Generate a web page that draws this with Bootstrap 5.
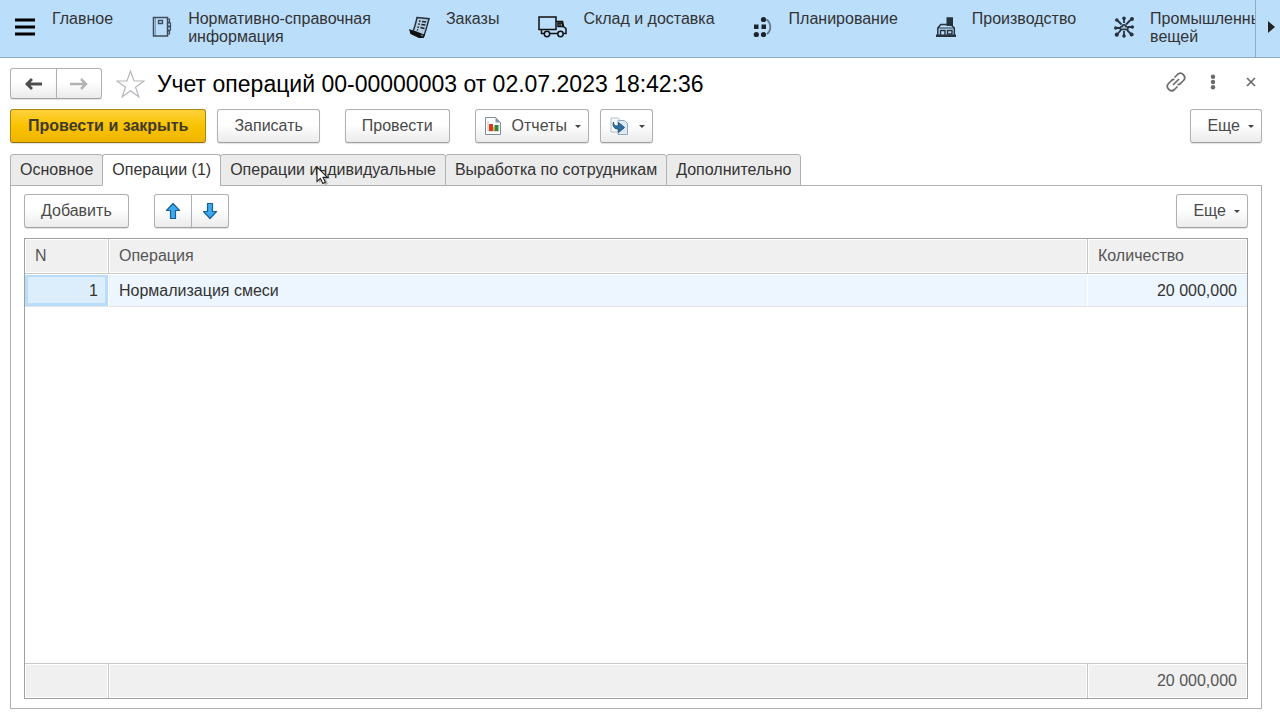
<!DOCTYPE html>
<html lang="ru">
<head>
<meta charset="utf-8">
<meta name="viewport" content="width=device-width, initial-scale=1">
<title>Учет операций</title>
<link href="https://cdn.jsdelivr.net/npm/bootstrap@5.3.0/dist/css/bootstrap.min.css" rel="stylesheet">
<style>
  body { font-family: "Liberation Sans", Arial, sans-serif; font-size: 16px; line-height: 18px; color: #333; background: #fff; }
  button { font-family: inherit; }
  svg { display: block; flex: none; }

  /* Section bar */
  .sections { background: #bbdefb; border-bottom: 1px solid #8eabc2; height: 58px; }
  .sections-menu { width: 52px; padding: 17px 0 0 14px; }
  .sections-list { gap: 38px; padding-top: 10px; overflow: hidden; }
  .sections-list a { color: #333; gap: 16px; white-space: nowrap; }
  .sections-list svg { margin-top: 6px; }
  .sections-next { width: 25px; border-left: 1px solid #8eabc2 !important; }

  .page-body { padding: 10px 18px 11px 10px; }
  .doc-title { font-size: 23px; line-height: 30px; color: #000; }
  .plain-icon { color: #6b6b6b; }
  .favorite { margin: 0 12px 0 14px; }

  /* Command buttons */
  .cmd-row { margin-top: 10px; }
  .gap-near { margin-left: 11px; }
  .gap-far { margin-left: 25px; }
  .cmd { --bs-btn-font-size: 16px; --bs-btn-line-height: 18px; --bs-btn-padding-x: 16px; --bs-btn-padding-y: 7px;
    --bs-btn-border-radius: 3px; --bs-btn-color: #4a4a4a; --bs-btn-border-color: #b0b0b0; --bs-btn-hover-border-color: #909090;
    display: inline-flex; align-items: center; height: 34px; white-space: nowrap;
    background: linear-gradient(#fff 45%, #ebebeb); border-bottom-color: #a0a0a0; box-shadow: 0 1px 1px rgba(0,0,0,.12); }
  .cmd-main { --bs-btn-padding-x: 17px; --bs-btn-color: #3f3a2c; --bs-btn-border-color: #a8860f; font-weight: 700;
    background: linear-gradient(#fdd03b, #fac300 50%, #f0b400); border-bottom-color: #937200; }
  .cmd-nav { height: 31px; padding: 0 13px; }
  .cmd-arrow { padding: 0 10px; }
  .cmd-icon { padding-left: 9px; }
  .cmd-icon svg { margin-right: 11px; }
  .cmd-icon-only svg { margin-right: 2px; }
  .caret { width: 0; border: 3px solid transparent; border-top-color: #444; border-bottom: 0; margin-left: 8px; margin-right: -9px; }

  /* Tabs */
  .doc-tabs { --bs-nav-tabs-border-color: #b0b0b0; margin-top: 11px; }
  .doc-tabs .nav-link { padding: 6px 9px; height: 32px; line-height: 18px; color: #333; background: #ebebeb;
    border-color: #b0b0b0; border-radius: 3px 3px 0 0; white-space: nowrap; }
  .doc-tabs .nav-item + .nav-item { margin-left: -1px; }
  .doc-tabs .nav-link.active { background: #fff; color: #333; border-color: #b0b0b0 #b0b0b0 #fff; }
  .pointer { position: absolute; left: 96px; top: 12px; z-index: 5; pointer-events: none; }
  .doc-pane { border: 1px solid #b0b0b0; border-top: 0; padding: 8px 13px 9px; }

  /* Operations grid */
  .grid-frame { border: 1px solid #a0a0a0; margin-top: 10px; }
  .ops-grid.table { margin: 0; color: #333; table-layout: fixed; border-collapse: separate; border-spacing: 0; }
  .ops-grid.table > * > tr > * { padding: 0 10px; font-weight: 400; vertical-align: middle; border: 0 solid #c8c8c8; box-shadow: none; }
  .ops-grid .col-n { width: 84px; }
  .ops-grid .col-qty { width: 159px; }
  .ops-grid.table > thead > tr > th, .ops-grid.table > tfoot > tr > td { background: #f0f0f0; color: #555; box-shadow: inset 0 0 0 1px #fff; height: 35px; }
  .ops-grid.table > thead > tr > th { border-bottom-width: 1px; }
  .ops-grid.table > tfoot > tr > td { border-top-width: 1px; }
  .ops-grid.table > thead > tr > :not(:last-child), .ops-grid.table > tfoot > tr > :not(:last-child) { border-right-width: 1px; }
  .ops-grid.table > tbody > .row-current > td { height: 33px; padding-top: 2px; background: #edf6fe; border-bottom: 1px solid #e4e4e4; border-right: 1px solid #fff; box-shadow: inset 0 1px 0 #fff; }
  .ops-grid.table > tbody > .row-current > .cell-current { background: #dcedfc; box-shadow: inset 0 1px 0 #fff, inset 0 0 0 3px #b8dcf9; }
  .ops-grid.table > tbody > .row-current > td:last-child { border-right: 0; }
</style>
</head>
<body class="min-vh-100 d-flex flex-column">

<nav class="sections d-flex flex-shrink-0" aria-label="Разделы">
  <button type="button" class="sections-menu border-0 bg-transparent d-flex flex-shrink-0" aria-label="Меню">
    <svg width="22" height="20" viewBox="0 0 22 20"><path d="M1 3h20M1 10h20M1 17h20" stroke="#000" stroke-width="3"/></svg>
  </button>
  <div class="sections-list d-flex flex-grow-1">
    <a href="#" class="text-decoration-none">Главное</a>
    <a href="#" class="d-flex text-decoration-none">
      <svg width="21" height="22" viewBox="0 0 21 22" fill="none" stroke="#3c4c5a"><path d="M2.500 1.500h14v18.500h-14z" stroke-width="1.500"/><path d="M4.500 2v18" stroke-opacity=".45"/><path d="M7.500 4.500h4v3h-4z" stroke-width="1.300"/><path d="M17 3h1.500v3H17m0 1h2.500v3H17m0 1h2.500v3H17m0 1h1.500v3H17" stroke-width="1.200"/></svg>
      <span>Нормативно-справочная<br>информация</span></a>
    <a href="#" class="d-flex text-decoration-none">
      <svg width="21" height="22" viewBox="0 0 21 22"><path d="M8 1.500l12 1.200c-1.500 5-3 12-5 16.500L4 15C6 11 7 6 8 1.500z" fill="#b3cbdf" stroke="#26323c" stroke-width="1.500"/><path d="M1 14l10.500 4 .5 2.800c1.500.5 3-.4 3.500-2.300l-1 2.500c-1 1-2 1.200-3.500.8L2 17.500z" fill="#111" stroke="#111" stroke-width="1.300"/><path d="M10 5l1.500.2M13 5.500l4 .5M9.300 8l1.500.3M12.300 8.500l4 .6M8.500 11l1.500.4M11.500 11.600l4 .8M8 13.800l1 .3" stroke="#17212a" stroke-width="1.500"/></svg>
      <span>Заказы</span></a>
    <a href="#" class="d-flex text-decoration-none">
      <svg width="30" height="22" viewBox="0 0 30 22" fill="none" stroke="#111" stroke-width="1.500"><path d="M2 1h17v12.500H2zM19 5.500h6.500l1 5 2.500 2v5h-2.500M4.500 14v3.500H7m6 0h8"/><path d="M21 7h4l.8 3.500H21z"/><path d="M23 7v3"/><circle cx="10" cy="18" r="2.700"/><circle cx="23.500" cy="18" r="2.700"/></svg>
      <span>Склад и доставка</span></a>
    <a href="#" class="d-flex text-decoration-none">
      <svg width="20" height="22" viewBox="0 0 20 22"><g fill="#1b242c"><circle cx="10.500" cy="3.500" r="2.600"/><path d="M1 8.500h4.500V13H1zM8.500 8.500H13V13H8.500z"/><circle cx="3.300" cy="18.500" r="2.600"/><circle cx="10.500" cy="18.500" r="2.600"/></g><path d="M13.500 3.500c5 3.500 5 11 .5 14.500" fill="none" stroke="#64798a" stroke-width="1.800"/></svg>
      <span>Планирование</span></a>
    <a href="#" class="d-flex text-decoration-none">
      <svg width="20" height="22" viewBox="0 0 20 22"><path d="M10.500 1.200H17V10h-6.500zM0 18.500h20V21H0z" fill="#26333e"/><path d="M1.800 19v-7l3-3.500h10l3.500 3.500v7" fill="none" stroke="#26333e" stroke-width="1.500"/><path d="M2 12h16" stroke="#26333e"/><path d="M4.500 19v-4.500H9V19m2.500-1v-3.500H16V18z" fill="none" stroke="#26333e" stroke-width="1.400"/></svg>
      <span>Производство</span></a>
    <a href="#" class="d-flex text-decoration-none">
      <svg width="20" height="22" viewBox="0 0 20 22"><path d="M10 1.500V7M3 4l4.500 4.500M17 3.500l-5 5M1 12h5m8-1h5.500M3 18.500l4-4.500m3 1v6m3-7l4.500 4.500" stroke="#26333e" stroke-width="1.800"/><g fill="#26333e"><circle cx="10" cy="2.300" r="1.800"/><circle cx="2.800" cy="4" r="1.800"/><circle cx="18" cy="3" r="2"/><circle cx="1.700" cy="12" r="1.700"/><circle cx="18.300" cy="11" r="1.700"/><circle cx="2.800" cy="18.700" r="2.100"/><circle cx="10" cy="20" r="1.800"/><circle cx="17.600" cy="18.500" r="2"/></g><path d="M6.500 13.500c-1-2.500.5-3 1.500-3 .5-2.500 4-2 4 0 2 0 2.500 2 1.500 3z" fill="#a3bfd5" stroke="#26333e" stroke-width="1.700"/></svg>
      <span>Промышленны<br>вещей</span></a>
  </div>
  <button type="button" class="sections-next border-0 bg-transparent p-0 pb-1 d-flex align-items-center flex-shrink-0" aria-label="Далее">
    <svg class="ms-2" width="16" height="14" viewBox="0 0 16 14"><path d="M4 1l7 6-7 6z" fill="#222"/></svg>
  </button>
</nav>

<main class="page-body flex-grow-1 d-flex flex-column">
  <header class="d-flex align-items-center">
    <div class="btn-group">
      <button type="button" class="btn cmd cmd-nav" aria-label="Назад"><svg width="19" height="14" viewBox="0 0 19 14"><path d="M2 7h16M8 2L3 7l5 5" fill="none" stroke="#4d4d4d" stroke-width="2.800"/></svg></button>
      <button type="button" class="btn cmd cmd-nav" aria-label="Вперед"><svg width="18" height="14" viewBox="0 0 18 14"><path d="M0 7h16M11 2l5 5-5 5" fill="none" stroke="#b2b2b2" stroke-width="2.500"/></svg></button>
    </div>
    <button type="button" class="favorite border-0 bg-transparent p-0" aria-label="Избранное"><svg width="29" height="28" viewBox="0 0 29 28"><path d="M14.500 1l3.500 10h10l-8.500 6.200L23 27l-8.500-6.200L6 27l3.500-9.800L1 11h10z" fill="#fff" stroke="#b4b8bc" stroke-width="1.200"/></svg></button>
    <h1 class="doc-title fw-normal m-0 flex-grow-1">Учет операций 00-00000003 от 02.07.2023 18:42:36</h1>
    <div class="d-flex align-items-center gap-4 pe-1 pb-1">
      <button type="button" class="plain-icon border-0 bg-transparent p-0" aria-label="Ссылка"><svg width="20" height="20" viewBox="0 0 20 20" fill="none" stroke="currentColor" stroke-width="1.700"><path d="M8.500 5.500l3-3c4-3.500 9.500 2 6 6l-3 3c-1 .9-2 1.200-3 1M11.500 14.500l-3 3c-4 3.500-9.500-2-6-6l3-3c1-.9 2-1.200 3-1M7 13l6-6"/></svg></button>
      <button type="button" class="plain-icon border-0 bg-transparent ps-0 pe-1 py-0" aria-label="Дополнительные действия"><svg width="6" height="16" viewBox="0 0 6 16" fill="currentColor"><circle cx="3" cy="2.800" r="2.200"/><circle cx="3" cy="8" r="2.200"/><circle cx="3" cy="13.200" r="2.200"/></svg></button>
      <button type="button" class="plain-icon border-0 bg-transparent p-0" aria-label="Закрыть"><svg width="14" height="14" viewBox="0 0 14 14"><path d="M3 3l8 8M11 3l-8 8" stroke="currentColor" stroke-width="1.700"/></svg></button>
    </div>
  </header>

  <div class="cmd-row d-flex align-items-center">
    <button type="button" class="btn cmd cmd-main">Провести и закрыть</button>
    <button type="button" class="btn cmd gap-near">Записать</button>
    <button type="button" class="btn cmd gap-far">Провести</button>
    <button type="button" class="btn cmd cmd-icon gap-far">
      <svg width="16" height="18" viewBox="0 0 16 18"><path d="M.5.500h10l5 5v12H.5z" fill="#fff" stroke="#7c8c99"/><path d="M10.500.500v5h5z" fill="#8798a6"/><path d="M3 4v10h10.500" fill="none" stroke="#c0c0c0"/><path d="M4 7h4v7H4z" fill="#d93a1c"/><path d="M8 10h1.500v4H8z" fill="#efb43c"/><path d="M9.500 8h4v6h-4z" fill="#31863c"/></svg>
      Отчеты<span class="caret"></span></button>
    <button type="button" class="btn cmd cmd-icon cmd-icon-only gap-near" aria-label="Создать на основании">
      <svg width="19" height="19" viewBox="0 0 19 19"><path d="M1 1h7l3 3v11H1z" fill="#f4f6f8" stroke="#b4c0c9"/><path d="M8 3.500h6.500l3 3V17.500H8z" fill="#dce9f4" stroke="#93aabc"/><path d="M3.500 5c0 3.500 1.500 4 5 4V5.500l6 5-6 5V12C5 12.200 2 10 3.500 5z" fill="#2f6c9f" stroke="#255780"/></svg>
      <span class="caret"></span></button>
    <button type="button" class="btn cmd ms-auto">Еще<span class="caret"></span></button>
  </div>

  <ul class="nav nav-tabs doc-tabs flex-nowrap" role="tablist">
    <li class="nav-item"><button type="button" class="nav-link" role="tab">Основное</button></li>
    <li class="nav-item"><button type="button" class="nav-link active" role="tab" aria-selected="true">Операции (1)</button></li>
    <li class="nav-item position-relative"><button type="button" class="nav-link" role="tab">Операции индивидуальные</button>
      <svg class="pointer" width="16" height="21" viewBox="0 0 16 21"><path d="M3 3v14l3-3 3 5 3-1-2-5h4z" fill="#000" opacity=".25"/><path d="M1 1v14.500l3.400-3.200 2.400 5.200 2.600-1.200L7 11.400h4.500z" fill="#fff" stroke="#222" stroke-width="1.100"/></svg></li>
    <li class="nav-item"><button type="button" class="nav-link" role="tab">Выработка по сотрудникам</button></li>
    <li class="nav-item"><button type="button" class="nav-link" role="tab">Дополнительно</button></li>
  </ul>

  <section class="doc-pane flex-grow-1 d-flex flex-column">
    <div class="d-flex align-items-center">
      <button type="button" class="btn cmd">Добавить</button>
      <div class="btn-group gap-far">
        <button type="button" class="btn cmd cmd-arrow" aria-label="Вверх"><svg width="16" height="18" viewBox="0 0 16 18"><path d="M8 1.500l6.500 7h-4v8h-5v-8h-4z" fill="#3fa9f0" stroke="#14609a" stroke-width="1.200" stroke-linejoin="round"/></svg></button>
        <button type="button" class="btn cmd cmd-arrow" aria-label="Вниз"><svg width="16" height="18" viewBox="0 0 16 18"><path d="M8 16.500l6.500-7h-4v-8h-5v8h-4z" fill="#3fa9f0" stroke="#14609a" stroke-width="1.200" stroke-linejoin="round"/></svg></button>
      </div>
      <button type="button" class="btn cmd ms-auto">Еще<span class="caret"></span></button>
    </div>

    <div class="grid-frame flex-grow-1 d-flex">
      <table class="table ops-grid">
        <colgroup><col class="col-n"><col><col class="col-qty"></colgroup>
        <thead><tr><th scope="col">N</th><th scope="col">Операция</th><th scope="col">Количество</th></tr></thead>
        <tbody>
          <tr class="row-current"><td class="cell-current text-end">1</td><td>Нормализация смеси</td><td class="text-end">20 000,000</td></tr>
          <tr><td colspan="3"></td></tr>
        </tbody>
        <tfoot><tr><td></td><td></td><td class="text-end">20 000,000</td></tr></tfoot>
      </table>
    </div>
  </section>
</main>

<script src="https://cdn.jsdelivr.net/npm/bootstrap@5.3.0/dist/js/bootstrap.bundle.min.js"></script>
</body>
</html>
